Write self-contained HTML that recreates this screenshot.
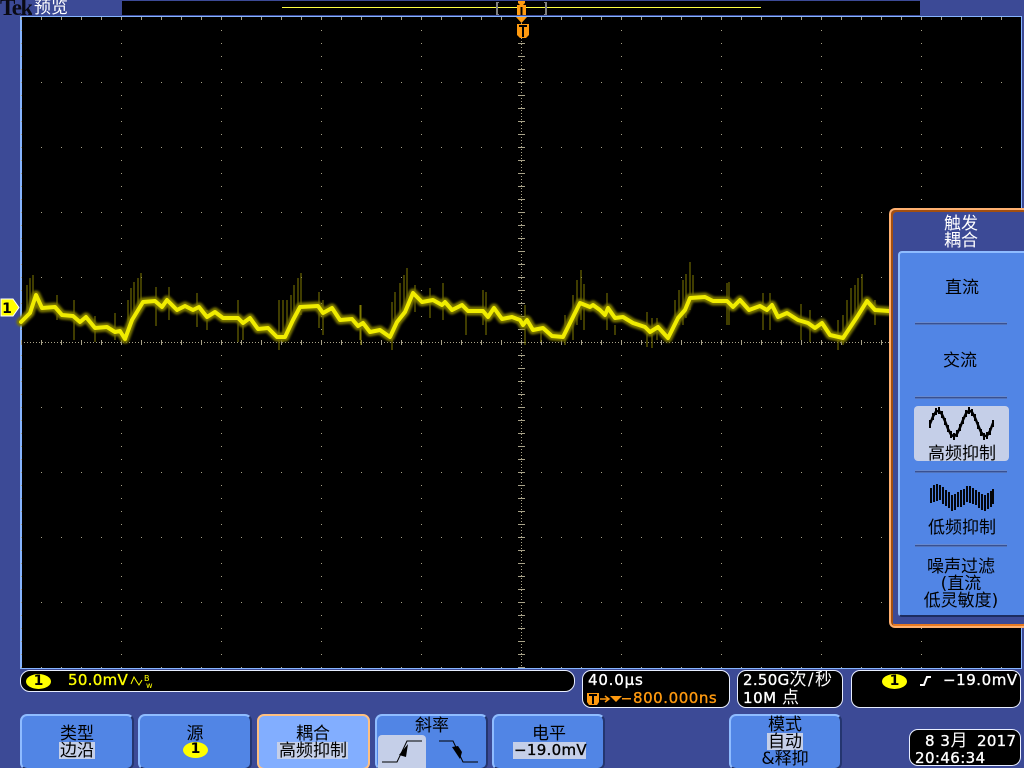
<!DOCTYPE html>
<html><head><meta charset="utf-8"><style>
html,body{margin:0;padding:0;background:#3c4a96;width:1024px;height:768px;overflow:hidden}
body{position:relative;font-family:"WenQuanYi Zen Hei","Noto Sans CJK SC",sans-serif}
.a{position:absolute}
.t{position:absolute;white-space:nowrap;line-height:17px;font-size:17px;color:#000;font-family:"DejaVu Sans","WenQuanYi Zen Hei","Noto Sans CJK SC",sans-serif}
.c{transform:translateX(-50%)}
.w{color:#fff}
.n{font-size:15px;-webkit-text-stroke:.35px currentColor;letter-spacing:.55px}
.box{position:absolute;background:#000;border:1px solid #e8eeff;border-radius:9px;box-sizing:border-box}
.btn{position:absolute;top:714px;height:56px;box-sizing:border-box;background:#5185e5;border:2px solid #8fbcff;border-right-color:#24356f;border-bottom-color:#1d2c60;border-radius:7px}
.hl{position:absolute;background:#c5cfe8}
.bad{position:absolute;background:#ffff00;border-radius:50%/50%;color:#000;text-align:center;font:bold 14px/15px "DejaVu Sans",sans-serif}
.div{position:absolute;left:915px;width:92px;height:3px;background:linear-gradient(to bottom,#7ea6ec,#2a3f80 60%,#6f98e0)}
</style></head><body>

<div class="t" style="left:0;top:-2px;height:18px;overflow:hidden;font:bold 23px/20px 'Liberation Serif',serif;letter-spacing:-1.5px;color:#0a0a14">Tek</div>
<div class="t w" style="left:34px;top:0px">预览</div>

<div class="a" style="left:122px;top:1px;width:798px;height:14px;background:#000"></div>
<div class="a" style="left:282px;top:7px;width:479px;height:1px;background:#ffff40"></div>

<!-- plot -->
<div class="a" style="left:20px;top:16px;width:1002px;height:653px;box-sizing:border-box;background:#000;border:1px solid #86b4ff;border-width:1px 1px 1px 2px"></div>

<svg class="a" style="left:0;top:0" width="1024" height="768" viewBox="0 0 1024 768">
<defs>
<pattern id="g" x="21" y="17" width="100" height="65" patternUnits="userSpaceOnUse">
<g fill="#a8a288"><rect x="0" y="0" width="1" height="1"/><rect x="20" y="0" width="1" height="1"/><rect x="40" y="0" width="1" height="1"/><rect x="60" y="0" width="1" height="1"/><rect x="80" y="0" width="1" height="1"/><rect x="0" y="13" width="1" height="1"/><rect x="0" y="26" width="1" height="1"/><rect x="0" y="39" width="1" height="1"/><rect x="0" y="52" width="1" height="1"/></g>
</pattern>
<pattern id="tk" x="21" y="17" width="20" height="13" patternUnits="userSpaceOnUse"><rect x="0" y="1" width="1" height="2" fill="#a8a288"/></pattern>
<pattern id="cx" x="21" y="340" width="20" height="5" patternUnits="userSpaceOnUse"><rect x="0" y="0" width="1" height="5" fill="#a8a288"/></pattern>
<pattern id="cy" x="518" y="17" width="7" height="13" patternUnits="userSpaceOnUse"><rect x="0" y="0" width="7" height="1" fill="#a8a288"/></pattern>
<filter id="bl" x="-5%" y="-50%" width="110%" height="200%"><feGaussianBlur stdDeviation="1"/></filter>
<path id="tr" d="M21 322L30 313L36 295L42 308L55 307L62 315L73 316L80 322L86 317L95 328L107 327L115 332L120 331L125 339L132 320L143 302L155 301L162 307L167 300L177 310L185 306L193 310L199 307L207 317L215 312L223 318L238 318L243 323L250 318L258 329L268 328L277 337L285 337L293 320L300 307L318 306L323 313L332 308L340 320L352 319L358 326L363 323L370 332L380 330L390 337L397 322L405 312L413 293L422 302L433 300L442 305L445 302L452 310L462 305L468 311L483 311L488 317L494 308L502 319L512 317L520 320L523 325L527 320L533 330L543 328L552 336L563 337L575 313L580 303L590 307L593 305L600 310L605 315L608 308L615 318L623 317L633 323L645 327L650 332L658 327L668 338L678 318L685 310L690 298L705 297L713 301L727 301L733 307L740 300L749 310L760 306L767 310L772 305L778 317L787 313L798 320L808 323L815 328L822 323L830 335L843 338L857 317L867 301L875 310L889 311"/>
</defs>
<rect x="21" y="17" width="1000" height="651" fill="url(#g)"/>
<rect x="21" y="17" width="1000" height="3" fill="url(#tk)"/>
<rect x="21" y="664" width="1000" height="3" fill="url(#tk)"/>
<rect x="21" y="340" width="1000" height="5" fill="url(#cx)"/>
<rect x="518" y="17" width="7" height="651" fill="url(#cy)"/>
<line x1="21" y1="342.5" x2="1021" y2="342.5" stroke="#a8a288" stroke-width="1" stroke-dasharray="1 2"/>
<line x1="521.5" y1="17" x2="521.5" y2="668" stroke="#a8a288" stroke-width="1" stroke-dasharray="1 2"/>

<!-- spikes -->
<path d="M27 285V320M30 278V318M33 275V312M57 295V320M74 300V340M95 316V342M115 313V340M128 300V340M131 288V330M134 282V322M138 278V312M141 273V310M156 287V326M169 287V320M197 293V327M207 310V330M238 300V342M243 325V340M279 350V300M283 300V342M287 300V338M291 295V330M294 285V322M298 278V312M301 273V315M319 292V328M323 300V335M360 305V340M361 305V345M392 302V350M395 292V328M400 283V322M404 275V316M407 268V310M415 285V312M430 288V318M443 283V320M466 304V335M483 290V325M486 292V335M525 305V345M541 332V342M565 315V345M573 295V340M577 280V325M581 270V320M584 284V330M607 293V330M615 325V335M647 312V347M652 318V348M657 318V340M675 300V330M679 290V325M683 280V325M686 274V318M690 262V310M693 275V300M727 283V325M729 282V325M763 293V330M770 293V330M801 304V340M810 310V342M838 320V350M843 315V345M847 300V335M851 288V325M855 285V322M858 278V318M862 274V310M875 300V325" stroke="#7f7a00" stroke-width="1" fill="none"/>

<!-- trace -->
<g fill="none" stroke-linejoin="round" stroke-linecap="round">
<use href="#tr" stroke="#7a7600" stroke-width="9" filter="url(#bl)"/>
<use href="#tr" stroke="#f0ec00" stroke-width="4"/>
</g>

<!-- channel marker -->
<path d="M1 299H13L19 307.5L13 316H1Z" fill="#ffff00" stroke="#fff" stroke-width="1"/>
<text x="7" y="313" font-family="DejaVu Sans" font-size="14" font-weight="bold" fill="#000" text-anchor="middle">1</text>

<!-- top markers -->
<path d="M497 2H499V3H498V14H499V15H496V2Z" fill="#808080"/>
<path d="M545 2H547V15H544V14H545V3H544V2Z" fill="#808080"/>
<path d="M518 1H525V3L523 5H520L518 3Z" fill="#ff9a10"/>
<rect x="517" y="5" width="9" height="10" fill="#ff9a10"/>
<rect x="520.5" y="7" width="2" height="8" fill="#000"/>
<path d="M516 17H527L521.5 23Z" fill="#ff9a10"/>
<path d="M517 24H529V35L526 38H520L517 35Z" fill="#ff9a10"/>
<path d="M519 25H527V27H524V37H522V27H519Z" fill="#000"/>
</svg>

<!-- readouts -->
<div class="box" style="left:20px;top:670px;width:555px;height:22px;border-radius:10px"></div>
<div class="bad" style="left:26px;top:674px;width:25px;height:15px">1</div>
<div class="t n" style="left:68px;top:672px;color:#ffff00;letter-spacing:.3px">50.0mV</div>
<svg class="a" style="left:130px;top:673px" width="24" height="18"><path d="M1 11L4 4L7 9L9 12L12 7" fill="none" stroke="#ffff00"/><text x="14" y="8" font-family="DejaVu Sans" font-size="8" fill="#ffff00">B</text><text x="16" y="15" font-family="DejaVu Sans" font-size="8" fill="#ffff00">w</text></svg>

<div class="box" style="left:582px;top:670px;width:148px;height:38px"></div>
<div class="t n w" style="left:588px;top:672px;letter-spacing:.8px">40.0µs</div>
<svg class="a" style="left:586px;top:691px" width="48" height="15">
<path d="M1 2H13V11L11 14H3L1 11Z" fill="#ff9a10"/><path d="M3 3H11V5H8V13H6V5H3Z" fill="#000"/>
<path d="M14 8H22M19 5L23 8L19 11" stroke="#ff9a10" fill="none" stroke-width="1.5"/>
<path d="M24 5H36L30 11Z" fill="#ff9a10"/><rect x="36" y="7" width="9" height="1.5" fill="#ff9a10"/>
</svg>
<div class="t n" style="left:633px;top:690px;color:#ff9a10">800.000ns</div>

<div class="box" style="left:737px;top:670px;width:106px;height:38px"></div>
<div class="t n w" style="left:743px;top:672px;letter-spacing:.3px">2.50G<span style="font-size:17px;letter-spacing:1.4px;-webkit-text-stroke:0">次/秒</span></div>
<div class="t n w" style="left:743px;top:690px">10M <span style="font-size:17px;-webkit-text-stroke:0">点</span></div>

<div class="box" style="left:851px;top:670px;width:170px;height:38px"></div>
<div class="bad" style="left:882px;top:674px;width:25px;height:15px">1</div>
<svg class="a" style="left:918px;top:674px" width="16" height="14"><path d="M2 11H6L9 3H13" fill="none" stroke="#fff" stroke-width="2"/></svg>
<div class="t n w" style="left:943px;top:672px">−19.0mV</div>

<div class="box" style="left:909px;top:729px;width:112px;height:37px"></div>
<div class="t n w" style="left:925px;top:733px">8 3<span style="font-size:17px;-webkit-text-stroke:0">月</span></div>
<div class="t n w" style="left:977px;top:733px;letter-spacing:.3px">2017</div>
<div class="t n w" style="left:915px;top:750px;letter-spacing:.4px">20:46:34</div>

<!-- buttons -->
<div class="btn" style="left:20px;width:114px"></div>
<div class="t c" style="left:77px;top:726px">类型</div>
<div class="hl" style="left:59px;top:742px;width:36px;height:17px"></div>
<div class="t c" style="left:77px;top:743px">边沿</div>

<div class="btn" style="left:138px;width:114px"></div>
<div class="t c" style="left:195px;top:726px">源</div>
<div class="bad" style="left:183px;top:742px;width:25px;height:16px">1</div>

<div class="btn" style="left:257px;width:113px;background:#82aeff;border-color:#ffc080"></div>
<div class="t c" style="left:313px;top:726px">耦合</div>
<div class="hl" style="left:277px;top:742px;width:71px;height:17px"></div>
<div class="t c" style="left:313px;top:743px">高频抑制</div>

<div class="btn" style="left:375px;width:113px"></div>
<div class="t c" style="left:432px;top:718px">斜率</div>
<div class="a" style="left:378px;top:735px;width:48px;height:33px;background:#c5cfe8;border-radius:4px 4px 0 0"></div>
<svg class="a" style="left:375px;top:735px" width="113" height="33">
<path d="M7 27H22L32 6H47" fill="none" stroke="#000" stroke-width="1"/>
<path d="M33 9L24 20L31 22Z" fill="#000"/>
<path d="M64 6H78L88 27H103" fill="none" stroke="#000" stroke-width="1"/>
<path d="M85 24L77 12L83 11L87 17Z" fill="#000"/>
</svg>

<div class="btn" style="left:492px;width:113px"></div>
<div class="t c" style="left:549px;top:726px">电平</div>
<div class="hl" style="left:513px;top:742px;width:73px;height:17px"></div>
<div class="t n" style="left:514px;top:742px;letter-spacing:.3px">−19.0mV</div>

<div class="btn" style="left:729px;width:113px"></div>
<div class="t c" style="left:785px;top:717px">模式</div>
<div class="hl" style="left:767px;top:733px;width:36px;height:17px"></div>
<div class="t c" style="left:785px;top:734px">自动</div>
<div class="t c" style="left:785px;top:751px">&amp;释抑</div>

<!-- side panel -->
<div class="a" style="left:889px;top:208px;width:140px;height:420px;box-sizing:border-box;background:#3c4a96;border:2px solid #ffb070;border-right:0;border-radius:6px;box-shadow:inset 2px 2px 0 #a34f10,inset 0 -2px 0 #e87a20"></div>
<div class="t w c" style="left:961px;top:216px">触发</div>
<div class="t w c" style="left:961px;top:233px">耦合</div>
<div class="a" style="left:898px;top:251px;width:130px;height:366px;box-sizing:border-box;background:#5185e5;border:2px solid #8fbcff;border-right:0;border-bottom:2px solid #1d2c60;border-radius:4px"></div>
<div class="t c" style="left:962px;top:280px">直流</div>
<div class="div" style="top:322px"></div>
<div class="t c" style="left:960px;top:353px">交流</div>
<div class="div" style="top:396px"></div>
<div class="a" style="left:914px;top:406px;width:95px;height:55px;background:#c5cfe8;border-radius:4px"></div>
<svg class="a" style="left:0;top:0" width="1024" height="768" viewBox="0 0 1024 768">
<path d="M930 423.8L933 416.5L936 411.5L939 410.8L942 414.4L945 421.2L948 428.9L951 434.6L954 436.5L957 433.9L960 427.6L963 420L966 413.5L969 410.5L972 412L975 417.6L978 425L981 432L984 436L987 435.7L990 431L993 423" fill="none" stroke="#000" stroke-width="2.4"/>
<path d="M930 420V428M933 413V420M936 408V415M939 407V414M942 411V418M945 418V425M948 425V432M951 431V438M954 433V440M957 430V437M960 424V431M963 417V424M966 410V417M969 407V414M972 409V416M975 414V421M978 422V429M981 429V436M984 433V440M987 432V439M990 428V435M993 420V427" fill="none" stroke="#000" stroke-width="2"/>
<path d="M931 488V503M934 485V502M937 484V501M940 485V500M943 487V504M946 490V506M949 492V508M952 495V511M955 494V510M958 492V507M961 490V507M964 489V505M967 486V502M970 486V503M973 488V504M976 490V505M979 492V508M982 494V510M985 495V511M988 493V509M991 491V507M993 489V504" fill="none" stroke="#000" stroke-width="1.9"/>
</svg>
<div class="t c" style="left:962px;top:446px">高频抑制</div>
<div class="div" style="top:470px"></div>
<div class="t c" style="left:962px;top:520px">低频抑制</div>
<div class="div" style="top:544px"></div>
<div class="t c" style="left:961px;top:559px">噪声过滤</div>
<div class="t c" style="left:961px;top:576px">(直流</div>
<div class="t c" style="left:961px;top:593px">低灵敏度)</div>

</body></html>
